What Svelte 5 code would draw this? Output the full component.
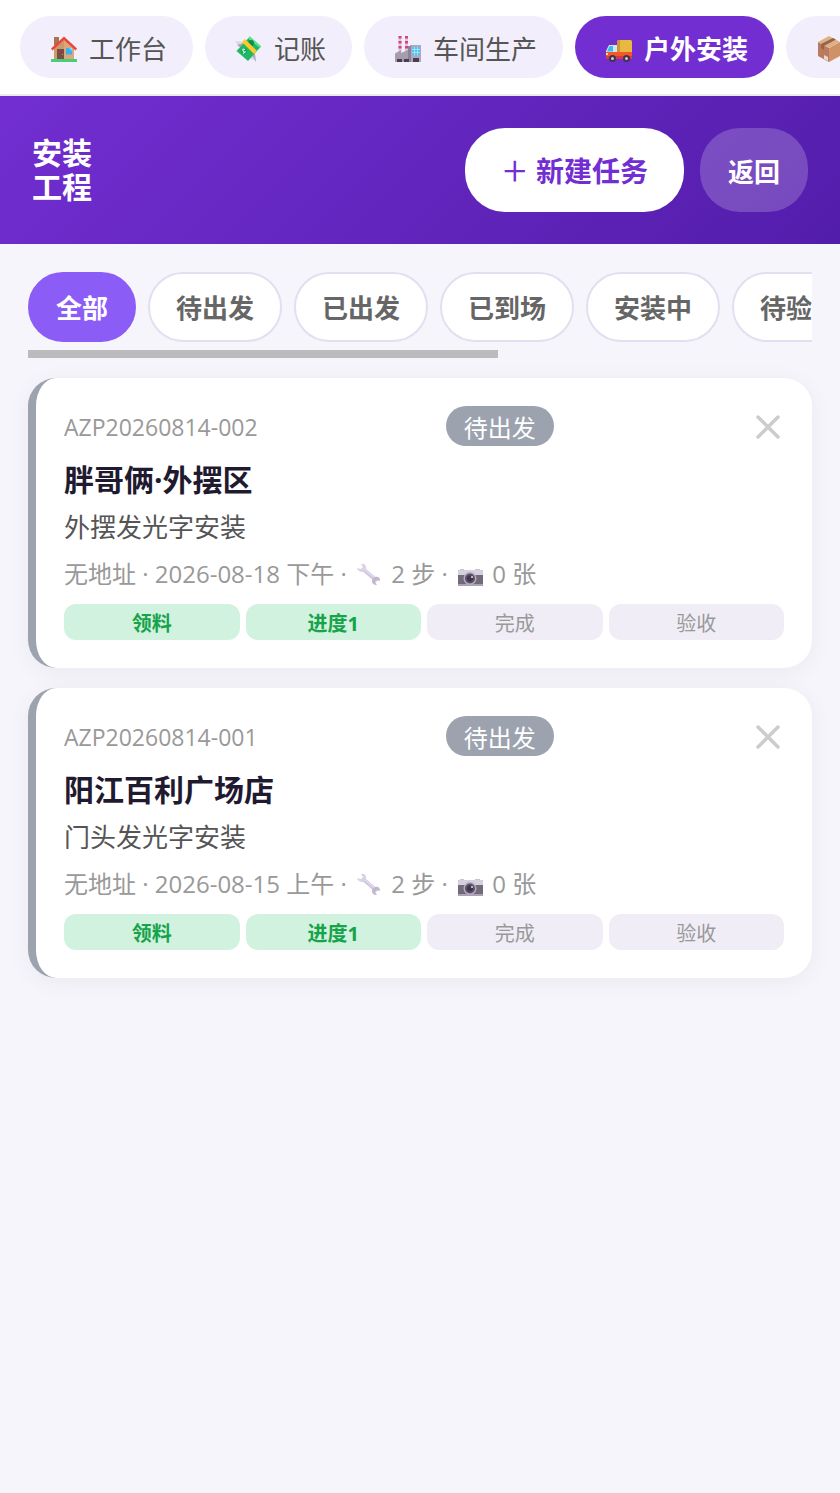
<script>
  const navItems = [
    { id: 'home', label: '工作台' },
    { id: 'money', label: '记账' },
    { id: 'factory', label: '车间生产' },
    { id: 'truck', label: '户外安装' },
    { id: 'box', label: '仓库' }
  ];

  const filters = ['全部', '待出发', '已出发', '已到场', '安装中', '待验收', '已完成', '已取消'];

  const stepNames = ['领料', '进度1', '完成', '验收'];

  let activeNav = 'truck';
  let activeFilter = '全部';
  let scrollShift = 0;

  let tasks = [
    {
      code: 'AZP20260814-002',
      status: '待出发',
      title: '胖哥俩·外摆区',
      desc: '外摆发光字安装',
      address: '无地址',
      time: '2026-08-18 下午',
      steps: 2,
      photos: 0
    },
    {
      code: 'AZP20260814-001',
      status: '待出发',
      title: '阳江百利广场店',
      desc: '门头发光字安装',
      address: '无地址',
      time: '2026-08-15 上午',
      steps: 2,
      photos: 0
    }
  ];

  $: visibleTasks = tasks.filter((t) => activeFilter === '全部' || t.status === activeFilter);

  function removeTask(code) {
    tasks = tasks.filter((t) => t.code !== code);
  }

  function handleScroll(e) {
    const el = e.currentTarget;
    const max = el.scrollWidth - el.clientWidth;
    scrollShift = max > 0 ? (el.scrollLeft / max) * 40 : 0;
  }
</script>

<div class="page">
  <nav class="top-nav">
    {#each navItems as item}
      <button class="nav-pill" class:active={activeNav === item.id} on:click={() => (activeNav = item.id)}>
        <svg class="nav-icon" viewBox="0 0 36 26" aria-hidden="true">
          {#if item.id === 'home'}
            <path d="M8 1h5v8H8z" fill="#a9744f" />
            <path d="M8 11 18 2l10 9v13H8z" fill="#dba878" />
            <path d="M8 12 18 3v21H8z" fill="#cf9a6b" />
            <path d="M5 12.500 18 .5l13 12-1.500 2L18 4 6.500 14.500z" fill="#e8473f" />
            <path d="M11 13h7v11h-7z" fill="#7d4b45" />
            <circle cx="16.500" cy="18.500" r=".6" fill="#d8a070" />
            <path d="M20 12h6v6.500h-6z" fill="#38b2f2" />
            <path d="M23 12h3v3z" fill="#8bd8fb" />
            <path d="M5 23h26v3H5z" fill="#45cf7b" />
          {:else if item.id === 'money'}
            <path d="m4 5 9 1 3 5-5 3z" fill="#d9d7df" />
            <path d="m6 9 7-2-3 5z" fill="#aaa6b3" />
            <path d="m19 17 5-1 1 10-3-3-2 1z" fill="#dcdae2" />
            <path d="m20 18 5 8-1-8z" fill="#b2aebb" />
            <path d="M18.500 1 30 10.500 17 25 5.500 15z" fill="#1fb864" />
            <path d="m18.500 0 11.500 10-1 2-11.500-9z" fill="#5ce08e" />
            <circle cx="20" cy="7" r="3" fill="#12894f" />
            <circle cx="13" cy="15" r="3" fill="#16a45a" />
            <path d="M14 13.500q-3-1-2 1t2 1.500-2 1.500" fill="none" stroke="#d4f7df" stroke-width="1.200" />
            <path d="m11 6 3-3 12 12-3 3z" fill="#ffc928" />
          {:else if item.id === 'factory'}
            <path d="M8.500 0h3v17h-3zM15 0h3v17h-3z" fill="#d8cbd8" />
            <path d="M8.500 0h3v2.500h-3zM8.500 5h3v2.500h-3zM8.500 10h3v2.500h-3zM15 0h3v2.500h-3zM15 5h3v2.500h-3zM15 10h3v2.500h-3z" fill="#dc4080" />
            <path d="M5 17.500 11 14v3l7-3v12H5z" fill="#a59dac" />
            <path d="M20 9h11v17H20z" fill="#b0a8bb" />
            <path d="M18 10h3v16h-3z" fill="#8c8496" />
            <path d="M22 11h8v8h-8z" fill="#4cc5f5" />
            <path d="M24.500 11v8M27.500 11v8M22 13.500h8M22 16.500h8" stroke="#b6e5fb" stroke-width=".8" />
            <path d="M7 23h5v3H7zM14 23h5v3h-5zM23 22h6v4h-6z" fill="#4b3c55" />
          {:else if item.id === 'truck'}
            <rect x="16" y="4" width="15" height="15" rx="1.500" fill="#e9b840" />
            <path d="M16 5.500q0-1.500 1.500-1.500H19v12h-3z" fill="#c7963a" />
            <path d="M8 9h8v9H5v-3z" fill="#d9e3f0" />
            <path d="M8.500 10H12v5.500H6z" fill="#36bdec" />
            <path d="M5 16h26v5q0 2-2 2H5z" fill="#f3572b" />
            <path d="M5 20h26v3H5z" fill="#d53d38" />
            <path d="M5 17h2v2H5z" fill="#ffe08a" />
            <circle cx="11.500" cy="22.500" r="3.500" fill="#40344c" />
            <circle cx="25.500" cy="22.500" r="3.500" fill="#40344c" />
            <circle cx="11.500" cy="22.500" r="1.500" fill="#cfc6db" />
            <circle cx="25.500" cy="22.500" r="1.500" fill="#cfc6db" />
          {:else}
            <path d="m6 6 11 6v14L6 20z" fill="#b97b5c" />
            <path d="m28 6-11 6v14l11-6z" fill="#cf9168" />
            <path d="M17 0 6 6l11 6 11-6z" fill="#deb082" />
            <path d="m21 2 3 1.500-12 6.500v4l-3-2V8z" fill="#94654d" />
            <path d="m12 19 4 2v4l-4-2z" fill="#e6d7d4" />
          {/if}
        </svg>
        <span>{item.label}</span>
      </button>
    {/each}
  </nav>

  <header class="header">
    <h1>
      <span>安装</span>
      <span>工程</span>
    </h1>
    <div class="header-actions">
      <button class="btn-new"><span class="plus">&#xFF0B;</span> 新建任务</button>
      <button class="btn-back">返回</button>
    </div>
  </header>

  <main>
    <div class="filters" on:scroll={handleScroll}>
      {#each filters as name}
        <button class="filter" class:active={activeFilter === name} on:click={() => (activeFilter = name)}>
          {name}
        </button>
      {/each}
    </div>
    <div class="scroll-track" aria-hidden="true">
      <div class="scroll-thumb" style="margin-left: {scrollShift}%"></div>
    </div>

    <div class="task-list">
      {#each visibleTasks as task (task.code)}
        <article class="card">
          <div class="card-top">
            <span class="code">{task.code}</span>
            <span class="badge">{task.status}</span>
            <button class="close-btn" aria-label="删除" on:click={() => removeTask(task.code)}>
              <svg width="24" height="24" viewBox="0 0 24 24" fill="none" stroke="currentColor" stroke-width="3.500" stroke-linecap="round">
                <line x1="2" y1="2" x2="22" y2="22" />
                <line x1="22" y1="2" x2="2" y2="22" />
              </svg>
            </button>
          </div>
          <h2>{task.title}</h2>
          <p class="desc">{task.desc}</p>
          <p class="meta">
            {task.address} · {task.time} ·
            <svg class="meta-icon" viewBox="0 0 32 24" aria-hidden="true">
              <path d="m10 7 14 12" stroke="#d3c5e4" stroke-width="4" />
              <path d="m11 7 12 10" stroke="#e5dcef" stroke-width="1.200" />
              <path d="M8 2q4-1 5 3t-3 5q-5 0-6-4l4 1 2-2z" fill="#d9d2e1" />
              <path d="M22 15q5-1 5 4l-4-1-1 2 2 3q-5 0-5-4 0-3 3-4z" fill="#c0b8ca" />
            </svg>
            {task.steps} 步 ·
            <svg class="meta-icon" viewBox="0 0 32 24" aria-hidden="true">
              <path d="M6 7h4v2H6zM21 7h5v2h-5z" fill="#c9c3cf" />
              <rect x="4" y="8" width="25" height="16" rx="1" fill="#716a79" />
              <path d="M4 9q0-1 1-1h23q1 0 1 1v4H4z" fill="#d5d0dd" />
              <path d="M4 22h25v1q0 1-1 1H5q-1 0-1-1z" fill="#aaa0b8" />
              <circle cx="16" cy="16.500" r="6.500" fill="#b6adc1" />
              <circle cx="16" cy="16.500" r="5" fill="#5c5068" />
              <circle cx="16" cy="16.500" r="3" fill="#40344e" />
              <circle cx="18" cy="15" r="1" fill="#e7def0" />
            </svg>
            {task.photos} 张
          </p>
          <div class="steps">
            {#each stepNames as step, i}
              <span class="step" class:done={i < task.steps}>{step}</span>
            {/each}
          </div>
        </article>
      {/each}
    </div>
  </main>
</div>

<style>
  :global(body) {
    background: #f6f5fb;
  }

  .page {
    font-family: 'Open Sans', 'Noto Sans CJK SC', sans-serif;
    color: #1f1a30;
  }

  button {
    font-family: inherit;
    border: none;
    cursor: pointer;
    white-space: nowrap;
    flex-shrink: 0;
  }

  h1,
  h2,
  p {
    margin: 0;
  }

  .top-nav {
    display: flex;
    gap: 12px;
    padding: 16px 20px;
    background: #fff;
    border-bottom: 2px solid #ebebee;
    overflow: hidden;
  }

  .nav-pill {
    display: flex;
    align-items: center;
    gap: 7px;
    padding: 15px 26px 11px;
    border-radius: 32px;
    background: #f2eefb;
    color: #555;
    font-size: 26px;
    line-height: 36px;
  }

  .nav-pill.active {
    background: #722ed1;
    color: #fff;
    font-weight: 700;
  }

  .nav-icon {
    width: 36px;
    height: 26px;
  }

  .header {
    display: flex;
    align-items: center;
    justify-content: space-between;
    padding: 32px;
    background: linear-gradient(135deg, #722ed1, #531dab);
  }

  h1 {
    color: #fff;
    font-size: 30px;
    font-weight: 700;
    line-height: 34px;
  }

  h1 span {
    display: block;
  }

  .header-actions {
    display: flex;
    gap: 16px;
  }

  .btn-new,
  .btn-back {
    border-radius: 40px;
    line-height: 36px;
    font-weight: 700;
  }

  .btn-new {
    padding: 25px 36px 23px;
    background: #fff;
    color: #722ed1;
    font-size: 28px;
  }

  .plus {
    font-weight: 500;
  }

  .btn-back {
    padding: 26px 28px 22px;
    background: rgba(255, 255, 255, 0.2);
    color: #fff;
    font-size: 26px;
  }

  main {
    padding: 28px;
  }

  .filters {
    display: flex;
    gap: 12px;
    overflow-x: auto;
    scrollbar-width: none;
  }

  .filter {
    padding: 16px 26px 14px;
    border: 2px solid #e2dff0;
    border-radius: 36px;
    background: #fff;
    color: #666;
    font-size: 26px;
    font-weight: 700;
    line-height: 36px;
  }

  .filter.active {
    background: #8b5cf6;
    border-color: #8b5cf6;
    color: #fff;
  }

  .scroll-track {
    margin: 8px 0 20px;
  }

  .scroll-thumb {
    width: 60%;
    height: 8px;
    background: #bbbbbd;
  }

  .task-list {
    display: flex;
    flex-direction: column;
    gap: 20px;
  }

  .card {
    padding: 28px;
    background: #fff;
    border-left: 8px solid #9ca3af;
    border-radius: 28px;
    box-shadow: 0 4px 24px rgba(0, 0, 0, 0.05);
  }

  .card-top {
    display: flex;
    align-items: center;
    justify-content: space-between;
    margin-bottom: 12px;
  }

  .code {
    padding-top: 2px;
    color: #999;
    font-size: 23px;
  }

  .badge {
    padding: 4px 18px 0;
    border-radius: 20px;
    background: #9ca3af;
    color: #fff;
    font-size: 24px;
    line-height: 36px;
  }

  .close-btn {
    display: flex;
    padding: 9px 4px 7px 14px;
    background: transparent;
    color: #ccc;
  }

  h2 {
    font-size: 30px;
    font-weight: 700;
    line-height: 44px;
  }

  .desc {
    margin: 6px 0 10px;
    color: #555;
    font-size: 26px;
    line-height: 38px;
  }

  .meta {
    color: #999;
    font-size: 24px;
    line-height: 36px;
  }

  .meta-icon {
    width: 32px;
    height: 24px;
    vertical-align: -3px;
  }

  .steps {
    display: grid;
    grid-template-columns: repeat(4, 1fr);
    gap: 6px;
    margin-top: 12px;
  }

  .step {
    padding-top: 4px;
    border-radius: 12px;
    background: #f0edf6;
    color: #999;
    font-size: 20px;
    line-height: 32px;
    text-align: center;
  }

  .step.done {
    background: #d1f2de;
    color: #16a34a;
    font-weight: 700;
  }
</style>
